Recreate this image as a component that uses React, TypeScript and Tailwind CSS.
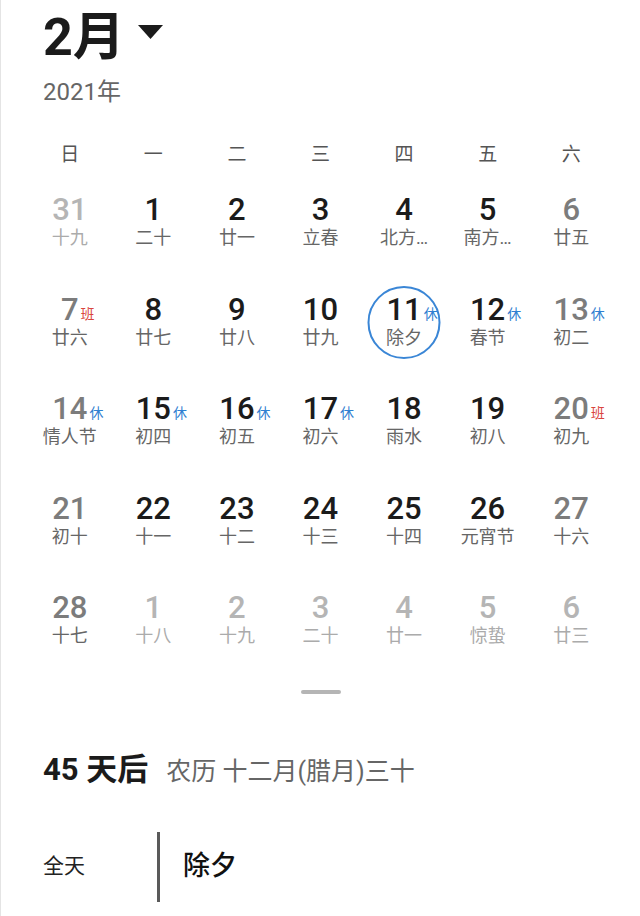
type Day = {
  n: number;
  lunar: string;
  tone: 'normal' | 'weekend' | 'other';
  badge?: '休' | '班';
  selected?: boolean;
};

const weekdays = ['日', '一', '二', '三', '四', '五', '六'];

const weeks: Day[][] = [
  [
    { n: 31, lunar: '十九', tone: 'other' },
    { n: 1, lunar: '二十', tone: 'normal' },
    { n: 2, lunar: '廿一', tone: 'normal' },
    { n: 3, lunar: '立春', tone: 'normal' },
    { n: 4, lunar: '北方…', tone: 'normal' },
    { n: 5, lunar: '南方…', tone: 'normal' },
    { n: 6, lunar: '廿五', tone: 'weekend' },
  ],
  [
    { n: 7, lunar: '廿六', tone: 'weekend', badge: '班' },
    { n: 8, lunar: '廿七', tone: 'normal' },
    { n: 9, lunar: '廿八', tone: 'normal' },
    { n: 10, lunar: '廿九', tone: 'normal' },
    { n: 11, lunar: '除夕', tone: 'normal', badge: '休', selected: true },
    { n: 12, lunar: '春节', tone: 'normal', badge: '休' },
    { n: 13, lunar: '初二', tone: 'weekend', badge: '休' },
  ],
  [
    { n: 14, lunar: '情人节', tone: 'weekend', badge: '休' },
    { n: 15, lunar: '初四', tone: 'normal', badge: '休' },
    { n: 16, lunar: '初五', tone: 'normal', badge: '休' },
    { n: 17, lunar: '初六', tone: 'normal', badge: '休' },
    { n: 18, lunar: '雨水', tone: 'normal' },
    { n: 19, lunar: '初八', tone: 'normal' },
    { n: 20, lunar: '初九', tone: 'weekend', badge: '班' },
  ],
  [
    { n: 21, lunar: '初十', tone: 'weekend' },
    { n: 22, lunar: '十一', tone: 'normal' },
    { n: 23, lunar: '十二', tone: 'normal' },
    { n: 24, lunar: '十三', tone: 'normal' },
    { n: 25, lunar: '十四', tone: 'normal' },
    { n: 26, lunar: '元宵节', tone: 'normal' },
    { n: 27, lunar: '十六', tone: 'weekend' },
  ],
  [
    { n: 28, lunar: '十七', tone: 'weekend' },
    { n: 1, lunar: '十八', tone: 'other' },
    { n: 2, lunar: '十九', tone: 'other' },
    { n: 3, lunar: '二十', tone: 'other' },
    { n: 4, lunar: '廿一', tone: 'other' },
    { n: 5, lunar: '惊蛰', tone: 'other' },
    { n: 6, lunar: '廿三', tone: 'other' },
  ],
];

function DayCell({ day }: { day: Day }) {
  const numColor =
    day.tone === 'other'
      ? 'text-[#b5b5b5]'
      : day.tone === 'weekend'
        ? 'text-[#7c7c7c]'
        : 'text-[#1b1b1b]';
  const lunarColor = day.tone === 'other' ? 'text-[#ababab]' : 'text-[#666666]';

  return (
    <div className="relative flex h-[99.5px] flex-col items-center pt-[20px]">
      {day.selected && (
        <div className="absolute left-1/2 top-[12px] h-[73px] w-[73px] -translate-x-1/2 rounded-full border-2 border-[#3a86d6]" />
      )}
      <div className="relative">
        <span className={`block text-[31px] font-medium leading-none ${numColor}`}>{day.n}</span>
        {day.badge && (
          <span
            className={`absolute left-full top-[13px] ml-[2px] whitespace-nowrap text-[14px] leading-none ${
              day.badge === '休' ? 'text-[#2f80d1]' : 'text-[#d9453d]'
            }`}
          >
            {day.badge}
          </span>
        )}
      </div>
      <span className={`mt-[4px] whitespace-nowrap text-[18px] leading-none ${lunarColor}`}>{day.lunar}</span>
    </div>
  );
}

export default function App() {
  return (
    <div className="min-h-[916px] w-[640px] border-l border-[#e4e4e4] bg-white font-['Roboto','Noto_Sans_CJK_SC',sans-serif]">
      <div className="pl-[42px] pt-[12px]">
        <div className="flex items-start">
          <span className="text-[52px] font-bold leading-none text-[#1b1b1b]">2月</span>
          <svg className="ml-[13px] mt-[13px]" width="25" height="14" viewBox="0 0 25 14">
            <path d="M0 0 L25 0 L12.5 14 Z" fill="#1b1b1b" />
          </svg>
        </div>
        <div className="mt-[16px] text-[24px] leading-none text-[#666666]">2021年</div>
      </div>

      <div className="mt-[41px] grid grid-cols-7 px-[27px]">
        {weekdays.map((w) => (
          <div key={w} className="text-center text-[19px] leading-none text-[#555555]">
            {w}
          </div>
        ))}
      </div>

      <div className="mt-[10px] px-[27px]">
        {weeks.map((week, i) => (
          <div key={i} className="grid grid-cols-7">
            {week.map((day, j) => (
              <DayCell key={j} day={day} />
            ))}
          </div>
        ))}
      </div>

      <div className="mx-auto mt-[18px] h-[4px] w-[40px] rounded-full bg-[#b5b5b5]" />

      <div className="mt-[60px] flex items-baseline pl-[42px]">
        <span className="text-[31px] font-bold leading-none text-[#1b1b1b]">45 天后</span>
        <span className="ml-[18px] text-[25px] leading-none text-[#666666]">农历 十二月(腊月)三十</span>
      </div>

      <div className="mt-[47px] flex items-center pl-[42px]">
        <span className="w-[114px] text-[21px] leading-none text-[#222222]">全天</span>
        <div className="h-[70px] w-[3px] bg-[#5a5a5a]" />
        <span className="ml-[23px] text-[27px] font-medium leading-none text-[#111111]">除夕</span>
      </div>
    </div>
  );
}
